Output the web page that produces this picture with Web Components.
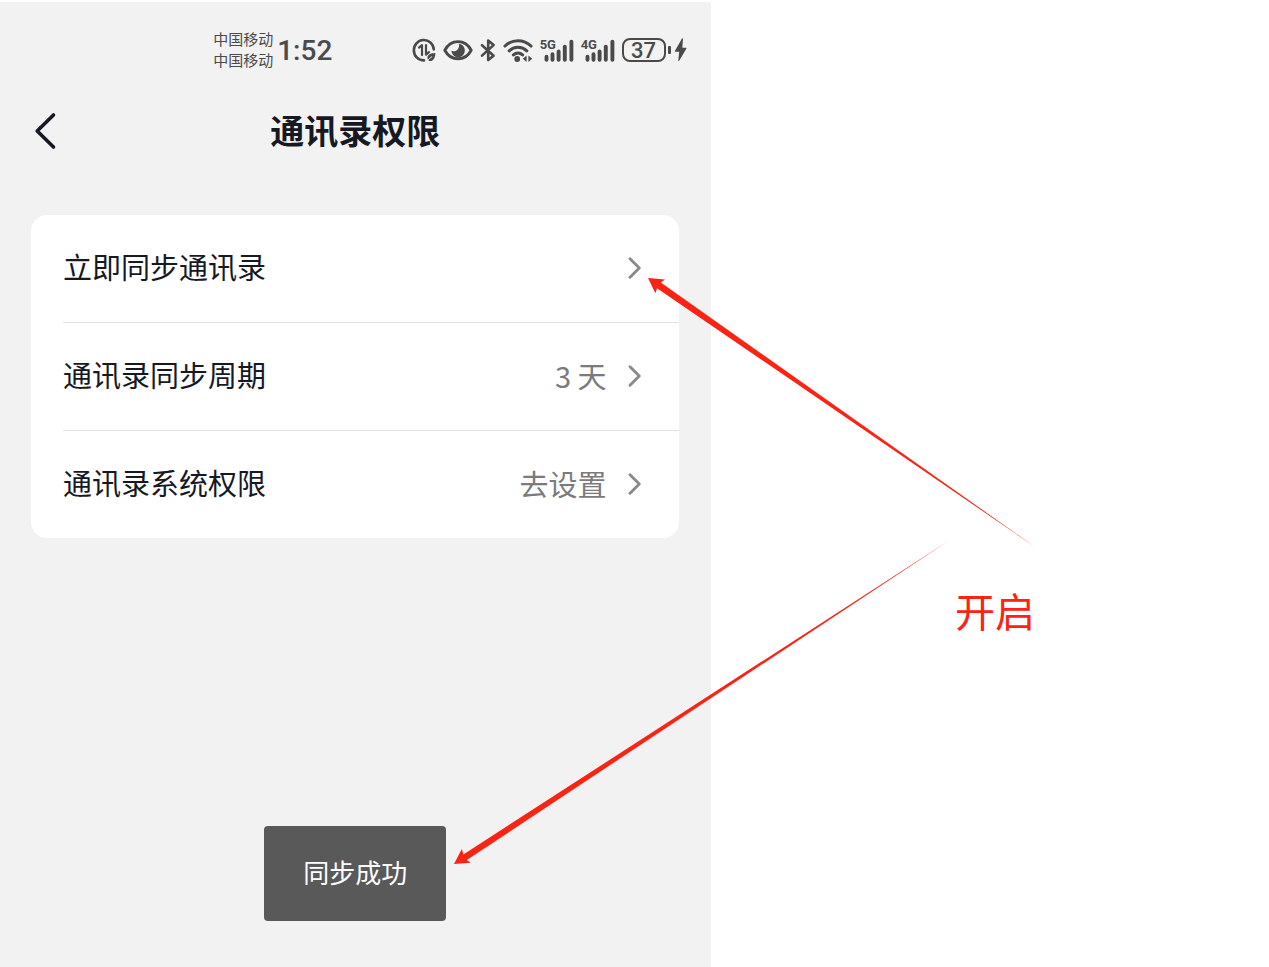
<!DOCTYPE html>
<html lang="zh-CN">
<head>
<meta charset="utf-8">
<meta name="viewport" content="width=device-width, initial-scale=1">
<title>通讯录权限</title>
<style>
  body {
    margin: 0;
    background: #fff;
    color: #161823;
    font-family: "Noto Sans CJK SC", sans-serif;
  }
</style>
</head>
<body>
<guide-page>
  <phone-screen>
    <status-bar slot="status" data-carrier="中国移动" data-time="1:52" data-battery="37"></status-bar>
    <nav-header slot="header">通讯录权限</nav-header>
    <settings-card>
      <settings-row>立即同步通讯录</settings-row>
      <settings-row data-value="3 天">通讯录同步周期</settings-row>
      <settings-row data-value="去设置">通讯录系统权限</settings-row>
    </settings-card>
    <toast-message slot="toast">同步成功</toast-message>
  </phone-screen>
  <guide-notes slot="notes">开启</guide-notes>
</guide-page>

<script>
class GuidePage extends HTMLElement {
  constructor() {
    super();
    this.attachShadow({ mode: 'open' });
  }

  connectedCallback() {
    this.shadowRoot.innerHTML = `
      <style>
        :host {
          display: flex;
          position: relative;
          box-sizing: border-box;
          min-height: 100vh;
          padding-top: 2px;
          overflow: hidden;
        }
      </style>
      <slot></slot>
      <slot name="notes"></slot>
    `;
  }
}

class PhoneScreen extends HTMLElement {
  constructor() {
    super();
    this.attachShadow({ mode: 'open' });
  }

  connectedCallback() {
    this.shadowRoot.innerHTML = `
      <style>
        :host {
          display: block;
          position: relative;
          flex: 0 0 56%;
          background: #f2f2f2;
        }

        main {
          padding: 52px 32px 0 31px;
        }

        .toast {
          position: absolute;
          left: 0;
          right: 0;
          bottom: 46px;
          display: flex;
          justify-content: center;
        }
      </style>
      <slot name="status"></slot>
      <slot name="header"></slot>
      <main><slot></slot></main>
      <div class="toast"><slot name="toast"></slot></div>
    `;
  }
}

class SignalBars extends HTMLElement {
  constructor() {
    super();
    this.attachShadow({ mode: 'open' });
  }

  connectedCallback() {
    const type = this.getAttribute('data-type') || '';

    this.shadowRoot.innerHTML = `
      <style>
        :host {
          display: block;
          position: relative;
          width: 34px;
          height: 24px;
        }

        svg {
          display: block;
        }

        span {
          position: absolute;
          left: 0;
          top: 0;
          font: bold 13px/13px "Roboto", sans-serif;
        }
      </style>
      <svg width="34" height="24" viewBox="0 0 34 24" fill="none" stroke="currentColor" stroke-width="3.9" stroke-linecap="round">
        <path d="M6.5 18.8v2.9M12.5 16.2v5.5M18.6 13.4v8.3M24.8 8.6v13.1M31.4 3.6v18.1"/>
      </svg>
      <span>${type}</span>
    `;
  }
}

class BatteryLevel extends HTMLElement {
  constructor() {
    super();
    this.attachShadow({ mode: 'open' });
  }

  connectedCallback() {
    const level = this.getAttribute('data-level') || '0';

    this.shadowRoot.innerHTML = `
      <style>
        :host {
          display: flex;
          align-items: center;
        }

        .cell {
          box-sizing: border-box;
          width: 44px;
          height: 24px;
          border: 2px solid currentColor;
          border-radius: 8px;
          font: 500 22px/21px "Roboto", sans-serif;
          text-align: center;
        }

        .cap {
          width: 3px;
          height: 8px;
          margin: 0 3px 0 2px;
          border-radius: 1px;
          background: currentColor;
        }

        svg {
          display: block;
        }
      </style>
      <div class="cell">${level}</div>
      <div class="cap"></div>
      <svg width="13" height="24" viewBox="0 0 13 24" fill="currentColor">
        <path d="M8 .6 1 12.8c-.3.6 0 1 .6 1h3.6L4.3 22.6c-.1.7.5.8.9.2l7.1-12.1c.3-.6 0-1-.6-1H8.3l.7-8.8C9 .2 8.4 0 8 .6z"/>
      </svg>
    `;
  }
}

class StatusBar extends HTMLElement {
  constructor() {
    super();
    this.attachShadow({ mode: 'open' });
  }

  connectedCallback() {
    const carrier = this.getAttribute('data-carrier') || '';
    const time = this.getAttribute('data-time') || '';
    const battery = this.getAttribute('data-battery') || '0';

    this.shadowRoot.innerHTML = `
      <style>
        :host {
          display: flex;
          align-items: center;
          height: 96px;
          padding: 0 24px 0 30%;
          color: #4a4a4a;
        }

        .carriers {
          padding-bottom: 2px;
          font-size: 15px;
          line-height: 21px;
        }

        .time {
          margin-left: 4px;
          padding-top: 2px;
          font: 500 28px/36px "Roboto", sans-serif;
        }

        .icons {
          display: flex;
          align-items: center;
          gap: 7px;
          margin-left: auto;
        }

        svg {
          display: block;
        }
      </style>
      <div class="carriers">
        <div>${carrier}</div>
        <div>${carrier}</div>
      </div>
      <div class="time">${time}</div>
      <div class="icons">
        <svg width="24" height="24" viewBox="0 0 24 24" fill="none" stroke="currentColor" stroke-width="2.6" stroke-linecap="round" stroke-linejoin="round">
          <path d="M21.8 11.4A10 10.2 0 1 0 12 22.4"/>
          <path d="M7 9.6 10 7.2v9.9M14 7.2v9.5l3-2.6" stroke-width="2.2"/>
          <path d="M23.4 15c-5 .2-8 1.500-8 4.800 0 1.600.8 2.600 1.700 3.100 3.700.9 6.100-2.400 6.300-7.900z" fill="currentColor" stroke="none"/>
          <path d="M15.400 23.200c1-2 2.400-3.300 4.400-4.400" stroke="#f2f2f2" stroke-width="1"/>
        </svg>
        <svg width="30" height="24" viewBox="0 0 30 24" fill="none" stroke="currentColor" stroke-width="2.9" stroke-linejoin="round">
          <path d="M1.800 12.200C4.700 6.700 9.300 3.600 15 3.600s10.300 3.100 13.200 8.600C25.300 17.700 20.700 20.800 15 20.800S4.700 17.700 1.800 12.200z"/>
          <path d="M15.800 5.800c3.400.4 6 3.100 6 6.600a6.700 6.700 0 0 1-13.400.4c2.100.9 4.300.5 5.800-.8 1.800-1.600 2.400-4 1.600-6.200z" fill="currentColor" stroke="none"/>
        </svg>
        <svg width="16" height="24" viewBox="0 0 16 24" fill="none" stroke="currentColor" stroke-width="2.6" stroke-linecap="round" stroke-linejoin="round">
          <path d="M2 7.200 13.600 17.700 8.200 22V2.600l5.400 4.500L2 17.600"/>
        </svg>
        <svg width="30" height="24" viewBox="0 0 30 24" fill="none" stroke="currentColor" stroke-width="3.1" stroke-linecap="round">
          <path d="M2 8c7.300-7 18.700-7 26 0M6.200 12.800c5-4.700 12.600-4.700 17.600 0M10.400 16.900c2.700-2.400 6.500-2.400 9.200 0"/>
          <circle cx="14.200" cy="21" r="2.9" fill="currentColor" stroke="none"/>
          <path d="m23.600 17.400-3.800 3.300 3.800 3.300zM25.400 17.400l3.800 3.300-3.800 3.300z" fill="currentColor" stroke="none"/>
        </svg>
        <signal-bars data-type="5G"></signal-bars>
        <signal-bars data-type="4G"></signal-bars>
        <battery-level data-level="${battery}"></battery-level>
      </div>
    `;
  }
}

class NavHeader extends HTMLElement {
  constructor() {
    super();
    this.attachShadow({ mode: 'open' });
  }

  connectedCallback() {
    this.shadowRoot.innerHTML = `
      <style>
        :host {
          display: grid;
          grid-template-columns: 64px 1fr 64px;
          align-items: center;
          height: 65px;
        }

        button {
          display: flex;
          justify-content: flex-end;
          height: 64px;
          align-items: center;
          padding: 0 7px 0 0;
          border: 0;
          background: none;
          color: inherit;
          cursor: pointer;
        }

        h1 {
          margin: 0;
          padding-bottom: 2px;
          font-size: 34px;
          font-weight: 700;
          line-height: 48px;
          text-align: center;
        }
      </style>
      <button type="button" aria-label="返回">
        <svg width="24" height="40" viewBox="0 0 24 40" fill="none" stroke="currentColor" stroke-width="3.6" stroke-linecap="round" stroke-linejoin="round">
          <path d="M20.500 4 4.200 20l16.300 16"/>
        </svg>
      </button>
      <h1><slot></slot></h1>
    `;
  }
}

class SettingsCard extends HTMLElement {
  constructor() {
    super();
    this.attachShadow({ mode: 'open' });
  }

  connectedCallback() {
    this.shadowRoot.innerHTML = `
      <style>
        :host {
          display: block;
          border-radius: 16px;
          background: #fff;
          overflow: hidden;
        }

        ::slotted(:not(:last-child)) {
          --divider: 1px solid #e3e3e4;
        }
      </style>
      <slot></slot>
    `;
  }
}

class SettingsRow extends HTMLElement {
  constructor() {
    super();
    this.attachShadow({ mode: 'open' });
  }

  connectedCallback() {
    const value = this.getAttribute('data-value') || '';

    this.shadowRoot.innerHTML = `
      <style>
        :host {
          display: block;
          padding-left: 32px;
        }

        button {
          display: flex;
          align-items: center;
          box-sizing: border-box;
          width: 100%;
          padding: 33px 37px 34px 0;
          border: 0;
          border-bottom: var(--divider, 0);
          background: none;
          color: inherit;
          font: inherit;
          font-size: 29px;
          line-height: 36px;
          text-align: left;
          cursor: pointer;
        }

        .label {
          flex: 1;
          padding-bottom: 4px;
        }

        .value {
          margin-right: 20px;
          padding-bottom: 2px;
          color: #7b7b7c;
        }

        svg {
          display: block;
          color: #8a8a8c;
        }
      </style>
      <button type="button">
        <span class="label"><slot></slot></span>
        ${value ? `<span class="value">${value}</span>` : ''}
        <svg width="15" height="24" viewBox="0 0 15 24" fill="none" stroke="currentColor" stroke-width="2.9" stroke-linecap="round" stroke-linejoin="round">
          <path d="m3 2.800 9.300 9.200L3 21.200"/>
        </svg>
      </button>
    `;
  }
}

class ToastMessage extends HTMLElement {
  constructor() {
    super();
    this.attachShadow({ mode: 'open' });
  }

  connectedCallback() {
    this.setAttribute('role', 'status');
    this.shadowRoot.innerHTML = `
      <style>
        :host {
          display: block;
          padding: 26px 39px 29px;
          border-radius: 4px;
          background: #595959;
          color: #fff;
          font-size: 26px;
          line-height: 40px;
        }
      </style>
      <slot></slot>
    `;
  }
}

// Hand-drawn arrows and caption laid over the screen
class GuideNotes extends HTMLElement {
  constructor() {
    super();
    this.attachShadow({ mode: 'open' });
  }

  connectedCallback() {
    this.shadowRoot.innerHTML = `
      <style>
        :host {
          position: absolute;
          left: 0;
          top: 0;
          color: #fa2314;
          pointer-events: none;
        }

        svg {
          display: block;
        }

        p {
          position: absolute;
          left: 955px;
          top: 580px;
          margin: 0;
          font-size: 40px;
          line-height: 60px;
          white-space: nowrap;
        }
      </style>
      <svg width="1060" height="900" viewBox="0 0 1060 900" fill="currentColor">
        <path d="M648 278l17 1.600-4.200 3L1035 547 657 288.200l-1.600 5z"/>
        <path d="M454 864l7.800-15 1.600 5.400L949 540.500 466.800 860l3.800 2.800z"/>
      </svg>
      <p><slot></slot></p>
    `;
  }
}

customElements.define('guide-page', GuidePage);
customElements.define('phone-screen', PhoneScreen);
customElements.define('signal-bars', SignalBars);
customElements.define('battery-level', BatteryLevel);
customElements.define('status-bar', StatusBar);
customElements.define('nav-header', NavHeader);
customElements.define('settings-card', SettingsCard);
customElements.define('settings-row', SettingsRow);
customElements.define('toast-message', ToastMessage);
customElements.define('guide-notes', GuideNotes);
</script>
</body>
</html>
